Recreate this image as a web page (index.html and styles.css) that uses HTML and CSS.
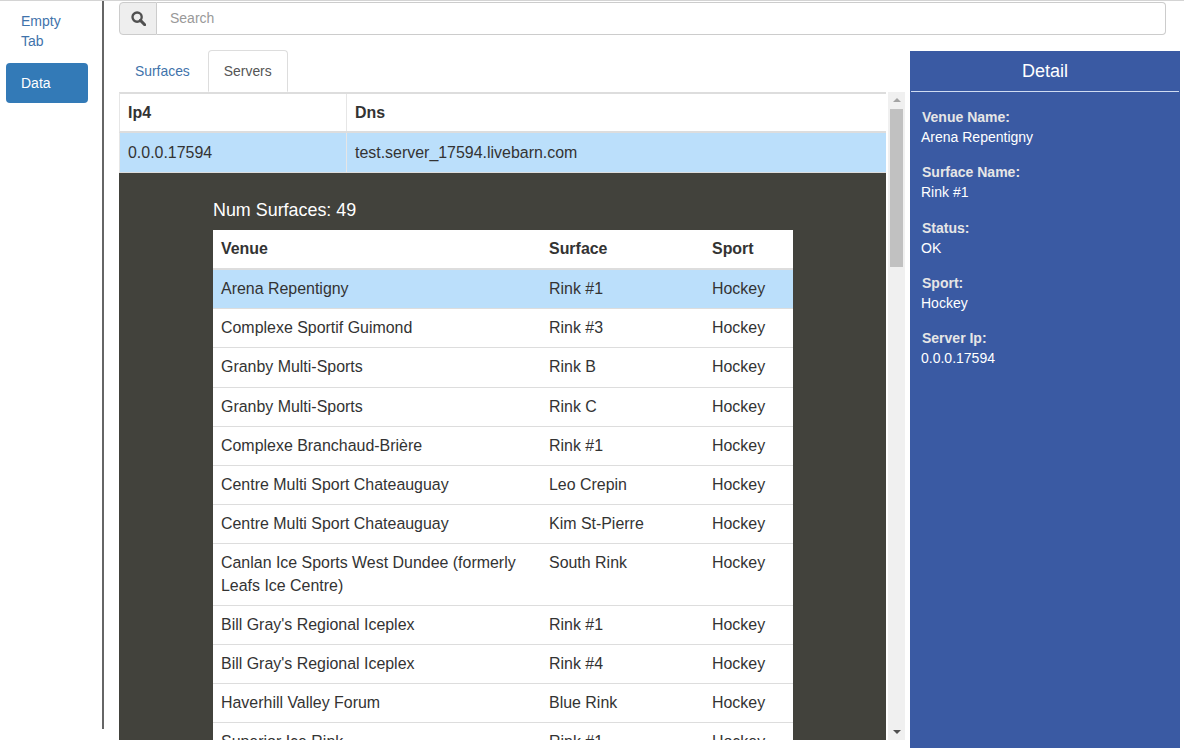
FILE: index.html
```html
<!DOCTYPE html>
<html lang="en">
<head>
<meta charset="utf-8">
<title>Data</title>
<link rel="stylesheet" href="styles.css">
</head>
<body>
<div class="page">
  <nav class="side">
    <a class="side-link">Empty Tab</a>
    <a class="side-link active">Data</a>
  </nav>
  <main class="main">
    <div class="search">
      <span class="addon">
        <svg width="15" height="15" viewBox="0 0 14 14"><circle cx="5.7" cy="5.7" r="4.3" fill="none" stroke="#505050" stroke-width="2.2"/><path d="M8.8 8.8 L12.8 12.8" stroke="#505050" stroke-width="2.8" stroke-linecap="round"/></svg>
      </span>
      <span class="input">Search</span>
    </div>
    <div class="content">
      <section class="left">
        <div class="tabs">
          <a class="tab">Surfaces</a>
          <a class="tab current">Servers</a>
        </div>
        <div class="pane">
          <div class="scroll">
            <div class="srv-head">
              <div class="c-ip">Ip4</div>
              <div class="c-dns">Dns</div>
            </div>
            <div class="srv-row">
              <div class="c-ip">0.0.0.17594</div>
              <div class="c-dns">test.server_17594.livebarn.com</div>
            </div>
            <div class="nested">
              <div class="num">Num Surfaces: 49</div>
              <table class="surfaces">
                <thead>
                  <tr><th class="v">Venue</th><th class="s">Surface</th><th>Sport</th></tr>
                </thead>
                <tbody>
                  <tr class="sel"><td>Arena Repentigny</td><td>Rink #1</td><td>Hockey</td></tr>
                  <tr><td>Complexe Sportif Guimond</td><td>Rink #3</td><td>Hockey</td></tr>
                  <tr><td>Granby Multi-Sports</td><td>Rink B</td><td>Hockey</td></tr>
                  <tr><td>Granby Multi-Sports</td><td>Rink C</td><td>Hockey</td></tr>
                  <tr><td>Complexe Branchaud-Brière</td><td>Rink #1</td><td>Hockey</td></tr>
                  <tr><td>Centre Multi Sport Chateauguay</td><td>Leo Crepin</td><td>Hockey</td></tr>
                  <tr><td>Centre Multi Sport Chateauguay</td><td>Kim St-Pierre</td><td>Hockey</td></tr>
                  <tr><td>Canlan Ice Sports West Dundee (formerly Leafs Ice Centre)</td><td>South Rink</td><td>Hockey</td></tr>
                  <tr><td>Bill Gray's Regional Iceplex</td><td>Rink #1</td><td>Hockey</td></tr>
                  <tr><td>Bill Gray's Regional Iceplex</td><td>Rink #4</td><td>Hockey</td></tr>
                  <tr><td>Haverhill Valley Forum</td><td>Blue Rink</td><td>Hockey</td></tr>
                  <tr><td>Superior Ice Rink</td><td>Rink #1</td><td>Hockey</td></tr>
                </tbody>
              </table>
            </div>
          </div>
          <div class="bar">
            <span class="arrow up"></span>
            <span class="thumb"></span>
            <span class="arrow down"></span>
          </div>
        </div>
      </section>
      <aside class="detail">
        <h2 class="detail-title">Detail</h2>
        <dl class="fields">
          <dt>Venue Name:</dt><dd>Arena Repentigny</dd>
          <dt>Surface Name:</dt><dd>Rink #1</dd>
          <dt>Status:</dt><dd>OK</dd>
          <dt>Sport:</dt><dd>Hockey</dd>
          <dt>Server Ip:</dt><dd>0.0.0.17594</dd>
        </dl>
      </aside>
    </div>
  </main>
</div>
</body>
</html>
```
FILE: styles.css
```css
* { box-sizing: border-box; }
html, body { margin: 0; height: 100%; overflow: hidden; background: #fff; }
body { font-family: "Liberation Sans", Arial, sans-serif; font-size: 14px; line-height: 20px; color: #333; }
.page { display: flex; align-items: flex-start; height: 750px; border-top: 1px solid #d4d4d4; }

.side { width: 104px; height: 728px; border-right: 2px solid #666; padding: 10px 14px 0 6px; flex: none; }
.side-link { display: block; padding: 0 15px; color: #3f73ab; }
.side-link.active { margin-top: 12px; padding: 10px 15px; background: #337ab7; color: #fff; border-radius: 4px; }

.main { flex: none; width: 1062px; margin-left: 15px; }
.search { display: flex; width: 1047px; height: 33px; margin-top: 1px; }
.addon { width: 38px; display: flex; align-items: center; justify-content: center; background: #eee; border: 1px solid #ccc; border-radius: 4px 0 0 4px; }
.input { flex: 1; border: 1px solid #ccc; border-left: 0; border-radius: 0 4px 4px 0; padding: 5px 13px; color: #999; }

.content { display: flex; gap: 5px; margin-top: 15px; }
.left { width: 786px; flex: none; }

.tabs { display: flex; height: 42px; }
.tab { padding: 10px 15px; color: #3f73ab; height: 42px; border: 1px solid transparent; margin-right: 2px; font-size: 13.9px; }
.tab.current { color: #555; background: #fff; border-color: #ddd; border-bottom-color: #fff; border-radius: 4px 4px 0 0; }

.pane { display: flex; height: 648px; }
.scroll { width: 768px; height: 648px; overflow: hidden; font-size: 15.95px; line-height: 22px; flex: none; }
.srv-head { display: flex; width: 767px; height: 41px; border-top: 2px solid #ddd; border-bottom: 2px solid #ddd; border-left: 1px solid #e6e6e6; font-weight: bold; color: #333; background: #fff; }
.srv-row { display: flex; width: 767px; height: 40px; background: #bbdffb; border-bottom: 1px solid #ddd; border-left: 1px solid #e6e6e6; }
.c-ip { width: 227px; padding: 9px 8px 0; border-right: 1px solid #e6e6e6; }
.c-dns { flex: 1; padding: 9px 8px 0; }
.srv-head .c-ip, .srv-head .c-dns { padding-top: 8px; }

.nested { background: #42423c; padding: 26px 0 0 94px; width: 767px; }
.num { color: #fff; font-size: 17.9px; line-height: 22px; margin-bottom: 9px; }
.surfaces { width: 580px; border-collapse: collapse; background: #fff; table-layout: fixed; line-height: 22.2px; }
.surfaces th { text-align: left; padding: 8px; border-bottom: 2px solid #ddd; color: #333; line-height: 22px; }
.surfaces td { padding: 8px; vertical-align: top; border-top: 1px solid #ddd; }
.surfaces .v { width: 328px; }
.surfaces .s { width: 163px; }
.surfaces .sel td { background: #bbdffb; border-top: 0; }

.bar { width: 18px; height: 648px; background: #f0f0f0; display: flex; flex-direction: column; align-items: center; margin-left: 1px; }
.arrow { display: block; flex: none; width: 0; height: 0; margin: 6px 0; border-left: 4px solid transparent; border-right: 4px solid transparent; }
.arrow.up { border-bottom: 4px solid #a3a3a3; }
.arrow.down { border-top: 4px solid #505050; margin-top: auto; }
.thumb { width: 13px; height: 158px; background: #c1c1c1; margin-top: 1px; }

.detail { width: 270px; height: 697px; margin-top: 1px; background: #3a5aa3; color: #fff; flex: none; }
.detail-title { margin: 0 1px; height: 41px; font-size: 18px; font-weight: normal; line-height: 40px; text-align: center; border-bottom: 1px solid #cfdcf2; }
.fields { margin: 0; padding: 15px 11px; }
.fields dt { font-weight: bold; color: #e6e6e6; margin-left: 1px; }
.fields dd { margin: 0 0 15.25px; }
```
